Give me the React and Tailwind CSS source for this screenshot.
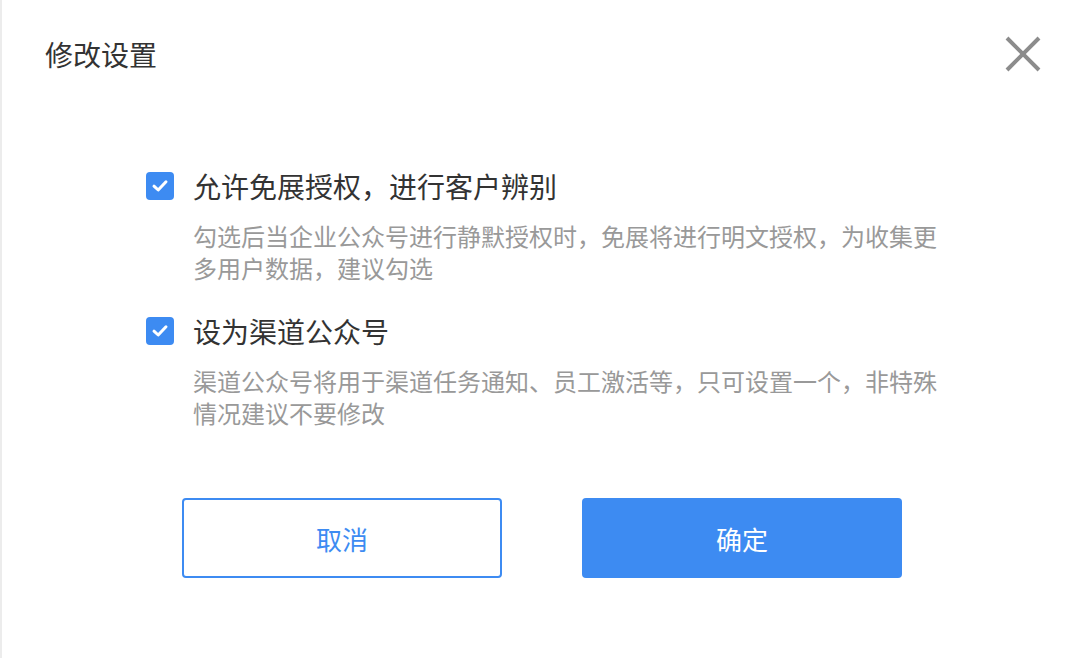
import React from "react";

const FONT = { fontFamily: '"Noto Sans CJK SC", "Noto Sans", sans-serif' };

function Check() {
  return (
    <div className="w-[28px] h-[28px] shrink-0 rounded-[4px] bg-[#3d8bf2] flex items-center justify-center">
      <svg width="20" height="20" viewBox="0 0 20 20" fill="none">
        <path d="M4 10.2 L8.2 14 L16 5.8" stroke="#fff" strokeWidth="3" strokeLinecap="round" strokeLinejoin="round" />
      </svg>
    </div>
  );
}

function Option({ label, desc, className = "" }) {
  return (
    <div className={"flex items-start " + className}>
      <div className="h-[40px] flex items-center">
        <Check />
      </div>
      <div className="ml-[19px]">
        <div className="text-[28px] leading-[40px] text-[#333333]">{label}</div>
        <div className="mt-[14px] w-[750px] text-[24px] leading-[32px] text-[#999999]">{desc}</div>
      </div>
    </div>
  );
}

export default function App() {
  return (
    <div style={FONT} className="w-[1080px] h-[658px] bg-white border-l-2 border-[#ececec] overflow-hidden">
      <div className="flex items-center justify-between pl-[43px] pr-[38px] pt-[34px]">
        <div className="text-[28px] leading-[40px] text-[#333333]">修改设置</div>
        <svg width="38" height="38" viewBox="0 0 38 38" fill="none">
          <path d="M3 3 L35 35 M35 3 L3 35" stroke="#8c8c8c" strokeWidth="4" />
        </svg>
      </div>
      <div className="w-[790px] mx-auto mt-[92px]">
        <Option
          label="允许免展授权，进行客户辨别"
          desc="勾选后当企业公众号进行静默授权时，免展将进行明文授权，为收集更多用户数据，建议勾选"
        />
        <Option
          className="mt-[27px]"
          label="设为渠道公众号"
          desc="渠道公众号将用于渠道任务通知、员工激活等，只可设置一个，非特殊情况建议不要修改"
        />
      </div>
      <div className="flex justify-center gap-[80px] mt-[69px] pl-[2px]">
        <button className="w-[320px] h-[80px] rounded-[4px] border-2 border-[#3d8bf2] bg-white text-[#3d8bf2] text-[26px]">
          取消
        </button>
        <button className="w-[320px] h-[80px] rounded-[4px] bg-[#3d8bf2] text-white text-[26px]">
          确定
        </button>
      </div>
    </div>
  );
}
